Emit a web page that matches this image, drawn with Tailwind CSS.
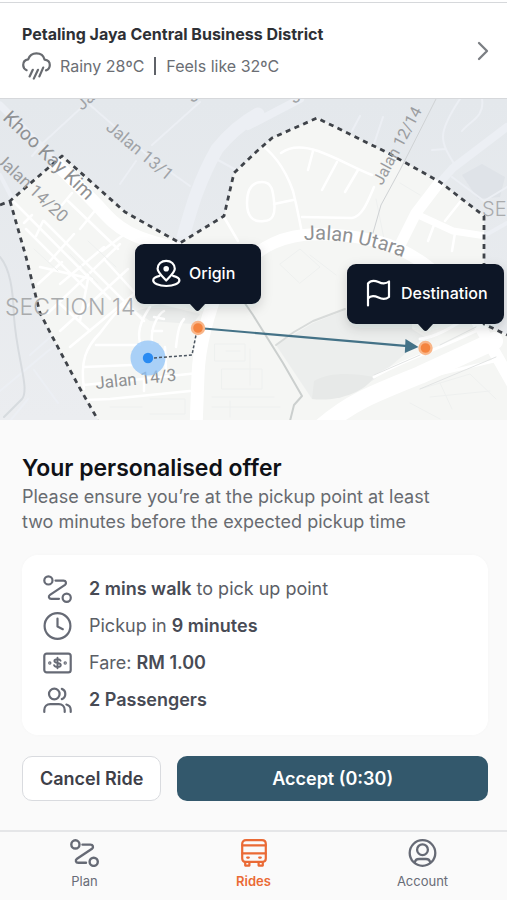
<!DOCTYPE html>
<html lang="en">
<head>
<meta charset="utf-8">
<meta name="viewport" content="width=device-width, initial-scale=1">
<title>Your personalised offer</title>
<script src="https://cdn.jsdelivr.net/npm/@tailwindcss/browser@4"></script>
</head>
<body class="flex min-h-screen flex-col bg-[#fafafa] font-['Inter',sans-serif] text-[#5b5f68]">

<header class="pt-[2px] bg-white">
  <a href="#weather" class="flex items-center justify-between border-y border-[#d6d8db] pt-[19px] pb-[18px] pl-[22px] pr-[18px]">
    <div>
      <h1 class="text-[16px] leading-6 font-bold text-[#2e3035]">Petaling Jaya Central Business District</h1>
      <div class="mt-[5px] flex h-[29px] items-center text-[16px] text-[#6b6e74]">
        <svg class="h-[28px] w-[29px]" viewBox="0 0 29 28" fill="none" stroke="#686b70" stroke-width="2.2" stroke-linecap="round" stroke-linejoin="round" aria-hidden="true">
          <path d="M4.6 18.2C2.4 17.2 1.2 15.400 1.200 13C1.200 9.800 3.400 7.700 6.200 7.300C7.500 3.500 10.500 1.400 14.400 1.400C18.500 1.400 21.700 4 22.600 7.700C25.600 8 27.800 10.100 27.800 13.100C27.800 15.800 26.300 17.700 24 18.400"/>
          <path d="M10.800 17.800L7.600 24.400M16 17.800L11.800 26.600M21.200 15.600L17.400 24.400"/>
        </svg>
        <span class="ml-[9px]">Rainy 28ºC</span>
        <span class="mx-[10px] h-[18px] w-[2px] bg-[#5f6268]"></span>
        <span>Feels like 32ºC</span>
      </div>
    </div>
    <svg class="h-[20px] w-[12px]" viewBox="0 0 12 20" fill="none" stroke="#7b7e83" stroke-width="2.300" stroke-linecap="round" stroke-linejoin="round" aria-hidden="true"><path d="M2 2L10 10L2 18"/></svg>
  </a>
</header>

<section aria-label="Route map">
  <svg class="block w-full" viewBox="0 0 507 321" role="img" aria-label="Map from origin to destination" fill="none" stroke-linecap="round" stroke-linejoin="round">
    <defs>
      <clipPath id="zone"><path d="M10 102L62 57L125 113L180 144L224 117L234 74L256 53L272 39L317 19L388 54L440 83L484 117V225L507 236V321H98L78 286L53 239L40 214L26 158Z"/></clipPath>
      <clipPath id="frame"><rect width="507" height="321"/></clipPath>
      <linearGradient id="land" x1="0" y1="0" x2="0" y2="1"><stop offset="0" stop-color="#e4e8ec"/><stop offset="1" stop-color="#ebedf0"/></linearGradient>
      <filter id="shade" x="-20%" y="-20%" width="140%" height="160%"><feDropShadow dx="0" dy="4" stdDeviation="6" flood-color="#1c2430" flood-opacity="0.160"/></filter>
    </defs>
    <g clip-path="url(#frame)">
      <rect width="507" height="321" fill="url(#land)"/>
      <path d="M462 76L482 65L505 78L500 98L478 100Z" fill="#dfe3e8"/>
      <!-- surrounding roads -->
      <g stroke="#eceff4" stroke-width="2">
        <path d="M0 6L56 62" stroke-width="7"/>
        <path d="M258 15C240 25 226 39 217 50C200 80 192 105 181 146" stroke-width="13"/>
        <path d="M248 27L300 0" stroke-width="8"/>
        <path d="M507 28L453 69L434 90" stroke-width="8"/>
        <path d="M82 8L44 43L32 57M90 6L152 60L190 87M200 3L152 46M136 62L120 85M218 61L238 72"/>
        <path d="M460 0C436 36 440 42 456 68M482 0C485 18 470 22 462 32M452 78L484 102L507 88M432 51L446 50M360 17L352 32M383 18L374 45" />
        <path d="M0 76L14 103M484 137L507 124" stroke-width="4"/>
        <path d="M0 292L48 252L66 240M34 271L58 304M30 256L56 233M10 322L28 300"/>
      </g>
      <path d="M0 158C10 170 13 190 14 218C17 260 30 290 22 300L4 318" stroke="#d7dbdf" stroke-width="2"/>

      <g clip-path="url(#zone)">
        <rect width="507" height="321" fill="#f5f6f4"/>
        <path d="M276 246L313 224L345 211H412V230L425 238L380 276C350 300 330 296 312 300L292 270Z" fill="#eceeed"/>
        <path d="M136 212L160 205L200 215L193 225L150 222Z" fill="#eceeed"/>
        <path d="M314 282C330 273 352 274 374 278C364 294 336 303 312 300Z" fill="#e7e9e8"/>
        <!-- local street grid -->
        <g stroke="#ffffff" stroke-width="2.500">
          <path d="M14 103L110 200M44 122L144 222M26 130L86 190M68 102L118 150M24 124L32 116M36 137L43 122M62 106L72 94M80 130L98 108M102 152L122 137M50 162L74 135M60 185L104 148"/>
          <path d="M40 168L92 180M38 185L62 163M48 214L120 145M60 232L128 170M70 248L140 190M88 180L80 222M104 160L136 195M60 205L90 232"/>
          <path d="M84 290C80 262 86 248 100 234C112 218 120 208 132 200M96 246L140 246M84 268L132 266M84 286L142 280L198 274M62 302L110 300L190 292"/>
          <path d="M140 244C136 228 146 214 150 208M152 244C150 226 160 214 164 212M176 248C178 230 180 224 184 220M154 218L164 220M152 232L162 232M144 280V292M165 248L166 274M196 280V290"/>
          <path d="M253 40C270 50 284 66 293 92C298 112 299 120 302 134M281 54C292 46 306 48 318 52C340 60 352 68 372 76M313 52L308 71M337 63L322 91M358 71L345 93M302 118L352 119C362 118 368 102 374 88M274 105L293 101"/>
          <path d="M262 83C272 83 273 92 274 102C276 116 272 122 264 122C252 124 247 116 247 104C247 90 252 83 262 83ZM460 103L445 122M434 126L428 142M455 134L452 152M224 118L238 142"/>
        </g>
        <!-- faint parcels -->
        <g stroke="#eef0ef" stroke-width="1">
          <path d="M215 245H245V262H215ZM222 270H262V290H222ZM212 298H274M212 308H280M226 252H240M250 250V286M230 302V318M150 300H185V315H150M110 308H142M420 290L470 275L496 300M410 304L440 320M430 298L490 292M440 284L452 310M280 165L300 150L320 168L300 184ZM310 156L336 176M376 100L384 140M400 84L420 96M70 155L98 184M34 150L58 172M88 142L116 168"/>
        </g>
        <!-- main roads -->
        <g stroke="#ffffff">
          <path d="M52 60L98 107C118 130 130 140 190 152" stroke-width="13"/>
          <path d="M222 180C206 218 199 250 198 276L196 330" stroke-width="13"/>
          <path d="M238 170C262 146 284 136 316 135C360 136 394 142 426 166C450 184 464 198 478 224L512 284" stroke-width="12"/>
          <path d="M445 76L416 114L400 146" stroke-width="11"/>
          <path d="M416 115L453 132L486 137" stroke-width="7"/>
          <path d="M322 328C350 304 370 296 420 276L494 242" stroke-width="18"/>
          <path d="M374 278C400 262 440 250 480 230M420 240C440 238 460 222 478 212M376 290L494 262" stroke-width="3"/>
        </g>
        <path d="M374 276L420 256M440 246L476 228M420 290L496 258" stroke="#e2e4e4" stroke-width="1"/>
      </g>
      <g stroke="#cbcfce" stroke-width="2">
        <path d="M242 200L253 216L283 264L302 297L294 306L290 322"/>
        <path d="M276 246L294 233L313 222L345 210" stroke="#d8dbda"/>
      </g>
      <path d="M436 0L400 71L381 106L373 134" stroke="#cfd2d4" stroke-width="1"/>

      <!-- service zone boundary -->
      <path d="M0 106L10 102L62 57L125 113L180 144L224 117L234 74L256 53L272 39L317 19L388 54L440 83L484 117V225L507 236M10 102L26 158L40 214L53 239L78 286L98 321" stroke="#3f4349" stroke-width="2.800" stroke-linecap="butt" stroke-dasharray="5 4.500"/>

      <!-- street names -->
      <g class="font-['Roboto',sans-serif]" fill="#8f9193">
        <text transform="translate(2 20) rotate(44)" font-size="19">Khoo Kay Kim</text>
        <text transform="translate(-5 62) rotate(43)" font-size="17" fill="#9a9c9f">Jalan 14/20</text>
        <text transform="translate(105 30) rotate(40)" font-size="17" fill="#a0a3a7">Jalan 13/1</text>
        <text transform="translate(382 87) rotate(-62)" font-size="16" fill="#9a9c9f">Jalan 12/14</text>
        <text transform="translate(96 290) rotate(-6)" font-size="17">Jalan 14/3</text>
        <path id="utara" d="M304 141Q354 138 410 161" fill="none"/>
        <text font-size="20"><textPath href="#utara">Jalan Utara</textPath></text>
        <text transform="translate(82 12) rotate(-42)" font-size="17" fill="#a0a3a7">Ja</text>
        <text transform="translate(192 4) rotate(-30)" font-size="17" fill="#a0a3a7">J</text>
        <text transform="translate(294 5) rotate(-30)" font-size="17" fill="#a0a3a7">J</text>
      </g>
      <g class="font-['Inter',sans-serif] font-light" fill="#a9abad">
        <text x="5" y="216" font-size="23">SECTION 14</text>
        <text x="482" y="117" font-size="20">SE</text>
      </g>

      <!-- walking leg -->
      <circle cx="148" cy="259" r="17.500" fill="#8fc3f8" fill-opacity="0.750"/>
      <path d="M154 259L192 256L196 236" stroke="#4b5560" stroke-width="1.500" stroke-linecap="butt" stroke-dasharray="3 2"/>
      <circle cx="148" cy="259" r="5.200" fill="#2a8bf2"/>
      <!-- ride leg -->
      <path d="M204 229.500L408 247.200" stroke="#447287" stroke-width="2.200"/>
      <path d="M405.500 240L418.500 248L404.800 254Z" fill="#447287"/>
      <g fill="#f4843f" stroke="#f9b689" stroke-width="2.400">
        <circle cx="198" cy="229" r="6"/>
        <circle cx="425.500" cy="249" r="6"/>
      </g>

      <!-- callouts -->
      <g filter="url(#shade)" fill="#0c1425">
        <path d="M144 145H252A9 9 0 0 1 261 154V196A9 9 0 0 1 252 205H205L199.500 211Q197.500 213 195.500 211L190 205H144A9 9 0 0 1 135 196V154A9 9 0 0 1 144 145Z"/>
        <path d="M356 165H495A9 9 0 0 1 504 174V216A9 9 0 0 1 495 225H433L427.500 231Q425.500 233 423.500 231L418 225H356A9 9 0 0 1 347 216V174A9 9 0 0 1 356 165Z"/>
      </g>
      <g stroke="#ffffff" stroke-width="2.200">
        <path d="M166.200 181.500C161 176.200 157.600 173.200 157.600 169.800C157.600 165 161.400 161.800 166.200 161.800C171 161.800 174.800 165 174.800 169.800C174.800 173.200 171.400 176.200 166.200 181.500Z"/>
        <circle cx="166.200" cy="169.800" r="1.700" fill="#ffffff"/>
        <path d="M159.600 176.800C155.800 177.600 153.200 179.200 153.200 181.200C153.200 184.400 158.800 187 166.300 187C173.800 187 179.400 184.400 179.400 181.200C179.400 179.200 176.800 177.600 173 176.800"/>
        <path d="M368 206.500V184.500C370 182 374 181 378.500 183C382.500 185 386 184.800 389 182.500V198C386 200.400 382.500 200.600 378.500 198.600C374 196.600 370 197.200 368 199.400"/>
      </g>
      <g class="font-['Inter',sans-serif] font-medium" font-size="16" fill="#ffffff">
        <text x="189" y="180">Origin</text>
        <text x="401" y="200">Destination</text>
      </g>
    </g>
  </svg>
</section>

<main class="pt-[33px] pr-[19px] pb-[29px] pl-[22px]">
  <h2 class="text-[23px] leading-[30px] font-semibold text-[#0f1116]">Your personalised offer</h2>
  <p class="mt-[1px] max-w-[430px] text-[18px] leading-[25px] text-[#686b70]">Please ensure you’re at the pickup point at least two minutes before the expected pickup time</p>

  <ul class="mt-[21px] flex flex-col gap-[9px] rounded-2xl bg-white px-[21px] pt-[20px] pb-[21px] text-[18px] leading-7 text-[#5b5e66] shadow-[0_0_4px_rgba(0,0,0,0.02)]">
    <li class="flex items-center gap-[17px]">
      <svg class="h-[28px] w-[29px] shrink-0" viewBox="0 0 29 28" fill="none" stroke="#666a75" stroke-width="2.200" stroke-linecap="round" stroke-linejoin="round" aria-hidden="true"><circle cx="5.400" cy="5.400" r="4.100"/><circle cx="23.700" cy="22.800" r="4.100"/><path d="M12.500 5.600H20.500C23 5.600 23.800 8.400 22 9.800L7 19.800C5 21.200 5.800 23.800 8.200 23.800H16"/></svg>
      <span><b class="font-semibold text-[#484b55]">2 mins walk</b> to pick up point</span>
    </li>
    <li class="flex items-center gap-[17px]">
      <svg class="h-[28px] w-[29px] shrink-0" viewBox="0 0 29 28" fill="none" stroke="#666a75" stroke-width="2.200" stroke-linecap="round" stroke-linejoin="round" aria-hidden="true"><circle cx="14.500" cy="14" r="12.900"/><path d="M14.500 6.500V14.500L19.800 17.200"/></svg>
      <span>Pickup in <b class="font-semibold text-[#484b55]">9 minutes</b></span>
    </li>
    <li class="flex items-center gap-[17px]">
      <svg class="h-[28px] w-[29px] shrink-0" viewBox="0 0 29 28" fill="none" stroke="#666a75" stroke-width="2.200" stroke-linecap="round" stroke-linejoin="round" aria-hidden="true"><rect x="1.300" y="4.600" width="26.400" height="18.800" rx="2.400"/><path stroke-width="1.900" d="M17.600 11.700C17.200 10.600 16.100 10.200 14.500 10.200C12.700 10.200 11.400 10.900 11.400 12.100C11.400 14.700 17.800 13.300 17.800 15.900C17.800 17.200 16.400 17.900 14.500 17.900C12.800 17.900 11.500 17.300 11.100 16.200M14.500 8.800V19.200"/><circle cx="6.800" cy="14" r="0.600"/><circle cx="22.200" cy="14" r="0.600"/></svg>
      <span>Fare: <b class="font-semibold text-[#484b55]">RM 1.00</b></span>
    </li>
    <li class="flex items-center gap-[17px]">
      <svg class="h-[28px] w-[29px] shrink-0" viewBox="0 0 29 28" fill="none" stroke="#666a75" stroke-width="2.200" stroke-linecap="round" stroke-linejoin="round" aria-hidden="true"><circle cx="11.300" cy="8" r="5.300"/><path d="M1.300 26V24C1.300 20.500 3.800 18.200 7.200 18.200H15.800C19.200 18.200 21.700 20.500 21.700 24V26M18.800 2.900C21 3.700 22.300 5.600 22.300 8C22.300 10.400 21 12.300 18.800 13.100M23.400 18.500C26 19.200 27.700 21.200 27.700 24V26"/></svg>
      <b class="font-semibold text-[#484b55]">2 Passengers</b>
    </li>
  </ul>

  <div class="mt-[21px] flex gap-4">
    <button type="button" class="h-[45px] shrink-0 rounded-[10px] border border-[#d9dbdf] bg-white px-[17px] text-[18px] font-semibold text-[#3e4048]">Cancel Ride</button>
    <button type="button" class="h-[45px] grow rounded-[10px] bg-[#33586c] text-[18px] font-semibold text-white">Accept (0:30)</button>
  </div>
</main>

<nav class="mt-auto grid grid-cols-3 border-t-2 border-[#e5e6e8] pt-[7px] pb-[9px] text-[13px] leading-5 text-[#686c77]" aria-label="Main">
  <a href="#plan" class="flex flex-col items-center gap-[4px]">
    <svg class="h-[28px] w-[29px]" viewBox="0 0 29 28" fill="none" stroke="#666a75" stroke-width="2.400" stroke-linecap="round" stroke-linejoin="round" aria-hidden="true"><circle cx="5.400" cy="5.400" r="4.100"/><circle cx="23.700" cy="22.800" r="4.100"/><path d="M12.500 5.600H20.500C23 5.600 23.800 8.400 22 9.800L7 19.800C5 21.200 5.800 23.800 8.200 23.800H16"/></svg>
    Plan
  </a>
  <a href="#rides" aria-current="page" class="flex flex-col items-center gap-[4px] font-semibold text-[#ea6a35]">
    <svg class="h-[28px] w-[26px]" viewBox="0 0 26 28" fill="none" stroke="#ea6a35" stroke-width="2.200" stroke-linecap="round" stroke-linejoin="round" aria-hidden="true"><path d="M5 1.200H21C23.400 1.200 24.800 2.700 24.800 5V19.500C24.800 21.600 23.600 22.800 21.600 22.800H4.400C2.400 22.800 1.200 21.600 1.200 19.500V5C1.200 2.700 2.600 1.200 5 1.200Z"/><path d="M1.400 6.400H24.600M1.400 14.400H24.600M6.200 18.600H7.800M18.200 18.600H19.800M4.200 23V26.600H8.400V23M17.600 23V26.600H21.800V23"/></svg>
    Rides
  </a>
  <a href="#account" class="flex flex-col items-center gap-[4px]">
    <svg class="h-[28px] w-[29px]" viewBox="0 0 29 28" fill="none" stroke="#666a75" stroke-width="2.300" stroke-linecap="round" stroke-linejoin="round" aria-hidden="true"><circle cx="14.500" cy="14" r="12.800"/><circle cx="14.500" cy="10.700" r="5.400"/><path d="M6.800 23.400C7.200 21.200 8.800 20 11 20H18C20.200 20 21.800 21.200 22.200 23.400"/></svg>
    Account
  </a>
</nav>
</body>
</html>
